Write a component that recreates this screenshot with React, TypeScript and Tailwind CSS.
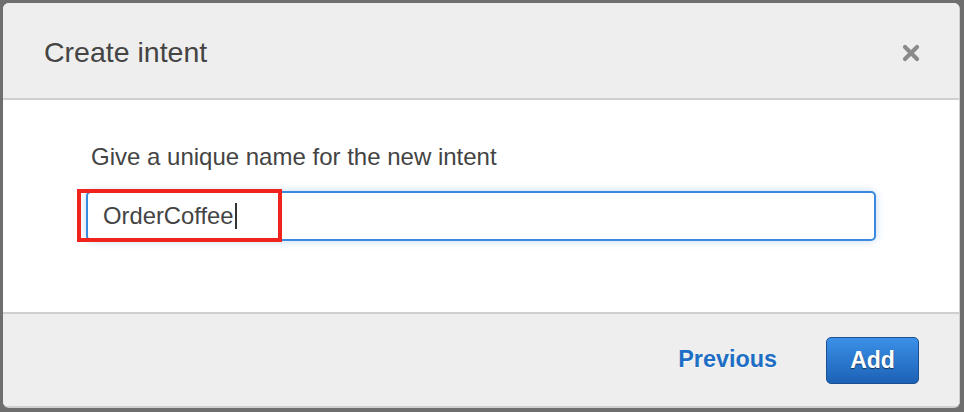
import React from "react";

const font = { fontFamily: '"Liberation Sans", Arial, sans-serif' };

const CloseIcon = () => (
	<svg width="18" height="18" viewBox="0 0 18 18" aria-hidden>
		<path d="M3 3 L15 15 M15 3 L3 15" stroke="#8a8a8a" strokeWidth="4.2" strokeLinecap="round" />
	</svg>
);

export default function App() {
	return (
		<div className="h-[412px] w-[964px] bg-[#6e6e6e] pt-[3px] pl-[3px]" style={font}>
			<div className="flex h-[405px] w-[957px] flex-col overflow-hidden rounded-[6px] border-r border-b-2 border-[#cfcfcf] bg-white">
				{/* header */}
				<div className="flex h-[97px] shrink-0 items-center justify-between border-b-2 border-[#cfcfcf] bg-[#eeeeee] pt-[4px] pr-[39px] pl-[41px]">
					<h2 className="text-[28.5px] font-normal text-[#444]">Create intent</h2>
					<button className="flex h-[18px] w-[18px] items-center justify-center">
						<CloseIcon />
					</button>
				</div>

				{/* body */}
				<div className="flex h-[212px] shrink-0 flex-col px-[83px] pt-[43px]">
					<label className="pl-[5px] text-[24px] leading-[28px] text-[#444]">Give a unique name for the new intent</label>
					<div className="relative mt-[20px]">
						<div className="flex h-[50px] items-center rounded-[5px] border-2 border-[#3b89df] bg-white pl-[15px] text-[23.8px] text-[#444] shadow-[0_0_8px_rgba(61,138,224,0.3)]">
							<span>OrderCoffee</span>
							<span className="ml-[1px] h-[26px] w-[2px] bg-[#333]" />
						</div>
						{/* annotation box */}
						<div className="pointer-events-none absolute top-[-2px] left-[-9px] h-[53px] w-[205px] border-[4px] border-[#f0241c]" />
					</div>
				</div>

				{/* footer */}
				<div className="flex flex-1 items-center justify-end gap-[49px] border-t-2 border-[#cfcfcf] bg-[#eeeeee] pr-[40px]">
					<button className="text-[23.4px] font-bold text-[#1d6ec4] [text-shadow:0_1px_0_rgba(255,255,255,0.8)]">Previous</button>
					<button className="flex h-[47px] w-[93px] items-center justify-center rounded-[5px] border border-[#1b4f8f] bg-gradient-to-b from-[#3b90e8] to-[#1c62b6] text-[23px] font-bold text-white [text-shadow:0_1px_1px_rgba(0,0,0,0.55)]">
						Add
					</button>
				</div>
			</div>
		</div>
	);
}
